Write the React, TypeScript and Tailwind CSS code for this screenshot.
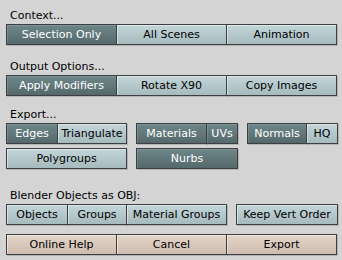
import React from "react";

type V = "on" | "off" | "beige";

function Btn({ w, v, children, cls = "" }: { w: string; v: V; children: React.ReactNode; cls?: string }) {
  const variant =
    v === "on"
      ? "bg-linear-to-b from-[#6f878a] to-[#55696c] text-white shadow-[inset_1px_1px_0_rgba(255,255,255,0.12),1px_1px_0_rgba(0,0,0,0.15)]"
      : v === "off"
      ? "bg-linear-to-b from-[#c3d5d8] to-[#a6bbbe] text-black shadow-[inset_1px_1px_0_rgba(255,255,255,0.45),1px_1px_0_rgba(0,0,0,0.15)]"
      : "bg-linear-to-b from-[#e4d4c8] to-[#cdbcaf] text-black shadow-[inset_1px_1px_0_rgba(255,255,255,0.45),1px_1px_0_rgba(0,0,0,0.15)]";
  return (
    <div
      className={`${w} ${variant} ${cls} relative h-[21px] shrink-0 border border-[#3c3f40] flex items-center justify-center whitespace-nowrap text-[11px] leading-[19px]`}
    >
      {children}
    </div>
  );
}

function Label({ children, cls = "" }: { children: React.ReactNode; cls?: string }) {
  return <div className={`${cls} h-[15px] leading-[14px] pl-[4px] text-black text-[11px]`}>{children}</div>;
}

export default function App() {
  return (
    <div
      className="w-[342px] h-[260px] bg-[#d4d4d4] pl-[6px] pt-[9px] overflow-hidden"
      style={{ fontFamily: "'DejaVu Sans', sans-serif" }}
    >
      <Label>Context...</Label>
      <div className="flex">
        <Btn w="w-[111px]" v="on">Selection Only</Btn>
        <Btn w="w-[111px]" v="off" cls="-ml-px">All Scenes</Btn>
        <Btn w="w-[111px]" v="off" cls="-ml-px">Animation</Btn>
      </div>

      <Label cls="mt-[15px]">Output Options...</Label>
      <div className="flex">
        <Btn w="w-[111px]" v="on">Apply Modifiers</Btn>
        <Btn w="w-[111px]" v="off" cls="-ml-px">Rotate X90</Btn>
        <Btn w="w-[111px]" v="off" cls="-ml-px">Copy Images</Btn>
      </div>

      <Label cls="mt-[12px]">Export...</Label>
      <div className="flex">
        <Btn w="w-[52px]" v="on">Edges</Btn>
        <Btn w="w-[70px]" v="off" cls="-ml-px">Triangulate</Btn>
        <Btn w="w-[71px]" v="on" cls="ml-[9px]">Materials</Btn>
        <Btn w="w-[32px]" v="on" cls="-ml-px">UVs</Btn>
        <Btn w="w-[60px]" v="on" cls="ml-[9px]">Normals</Btn>
        <Btn w="w-[32px]" v="off" cls="-ml-px">HQ</Btn>
      </div>
      <div className="flex mt-[4px]">
        <Btn w="w-[121px]" v="off">Polygroups</Btn>
        <Btn w="w-[102px]" v="on" cls="ml-[9px]">Nurbs</Btn>
      </div>

      <Label cls="mt-[20px]">Blender Objects as OBJ:</Label>
      <div className="flex">
        <Btn w="w-[62px]" v="off">Objects</Btn>
        <Btn w="w-[60px]" v="off" cls="-ml-px">Groups</Btn>
        <Btn w="w-[101px]" v="off" cls="-ml-px">Material Groups</Btn>
        <Btn w="w-[102px]" v="off" cls="ml-[9px]">Keep Vert Order</Btn>
      </div>

      <div className="flex mt-[9px]">
        <Btn w="w-[111px]" v="beige">Online Help</Btn>
        <Btn w="w-[111px]" v="beige" cls="-ml-px">Cancel</Btn>
        <Btn w="w-[111px]" v="beige" cls="-ml-px">Export</Btn>
      </div>
    </div>
  );
}
